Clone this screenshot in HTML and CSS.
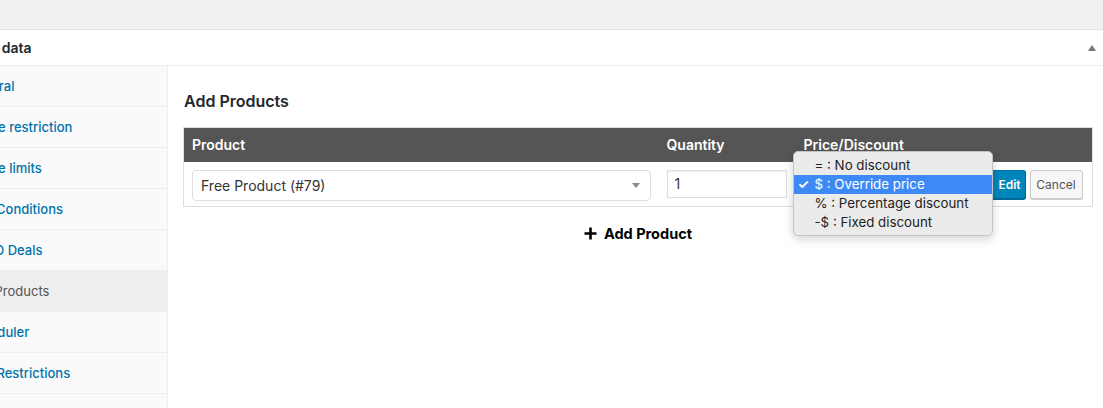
FILE: index.html
```html
<!DOCTYPE html>
<html>
<head>
<meta charset="utf-8">
<link rel="stylesheet" href="styles.css">
</head>
<body>
<div class="topbar"></div>
<div class="postbox">
  <div class="postbox-header">
    <h2 class="hndle">Coupon data</h2>
    <span class="toggle"></span>
  </div>
  <div class="panel-wrap">
    <ul class="tabs">
      <li><a href="#">General</a></li>
      <li><a href="#">Usage restriction</a></li>
      <li><a href="#">Usage limits</a></li>
      <li><a href="#">Cart Conditions</a></li>
      <li><a href="#">BOGO Deals</a></li>
      <li class="active"><a href="#">Add Products</a></li>
      <li><a href="#">Scheduler</a></li>
      <li><a href="#">Role Restrictions</a></li>
    </ul>
    <div class="panel">
      <h3 class="panel-title">Add Products</h3>
      <table class="products">
        <colgroup>
          <col class="c-product">
          <col class="c-qty">
          <col class="c-price">
          <col>
        </colgroup>
        <thead>
          <tr><th>Product</th><th>Quantity</th><th class="th-price">Price/Discount</th><th></th></tr>
        </thead>
        <tbody>
          <tr>
            <td>
              <div class="select product-select">
                <span>Free Product (#79)</span>
                <span class="arrow"></span>
              </div>
            </td>
            <td><div class="input">1</div></td>
            <td class="price-cell">
              <div class="select price-select"><span>$ : Override price</span></div>
              <div class="menu">
                <div class="opt">= : No discount</div>
                <div class="opt selected"><span class="check">✓</span>$ : Override price</div>
                <div class="opt">% : Percentage discount</div>
                <div class="opt">-$ : Fixed discount</div>
              </div>
            </td>
            <td class="actions">
              <button class="btn btn-primary">Edit</button>
              <button class="btn btn-cancel">Cancel</button>
            </td>
          </tr>
        </tbody>
      </table>
      <div class="add-row">
        <a class="add-link" href="#">
          <svg width="13" height="13" viewBox="0 0 13 13"><path d="M6.5 0.5v12M0.5 6.5h12" stroke="#000" stroke-width="2.6"/></svg>
          Add Product
        </a>
      </div>
    </div>
  </div>
</div>
</body>
</html>
```
FILE: styles.css
```css
* { box-sizing: border-box; }
html, body { margin: 0; padding: 0; }
body {
  background: #f1f1f1;
  font-family: Inter, "Noto Sans", sans-serif;
  color: #23282d;
  overflow: hidden;
  height: 408px;
}
.topbar { height: 29px; background: #f1f1f1; }
.postbox {
  background: #fff;
  border-top: 1px solid #e5e5e5;
  margin-left: -67px;
}
.postbox-header {
  height: 36px;
  border-bottom: 1px solid #eee;
  display: flex;
  align-items: center;
  justify-content: space-between;
  padding: 0 7px 0 12px;
}
.hndle {
  margin: 0;
  font-size: 14px;
  font-weight: 600;
  color: #23282d;
}
.toggle {
  width: 0; height: 0;
  border-left: 4px solid transparent;
  border-right: 4px solid transparent;
  border-bottom: 6px solid #72777c;
  margin-top: 1px;
}
.panel-wrap {
  display: flex;
  height: 343px;
}
.tabs {
  list-style: none;
  margin: 0; padding: 0;
  width: 235px;
  flex: none;
  background: #fafafa;
  border-right: 1px solid #eee;
}
.tabs li {
  height: 41px;
  border-bottom: 1px solid #eee;
  display: flex;
  align-items: center;
  padding-left: 33px;
}
.tabs a {
  color: #0073aa;
  text-decoration: none;
  font-size: 13px;
  font-weight: 500;
}
.tabs li.active { background: #eee; }
.tabs li.active a { color: #555; font-weight: 400; }
.panel {
  flex: 1;
  padding: 24px 10px 0 15px;
}
.panel-title {
  margin: 0 0 15px 1px;
  font-size: 16px;
  line-height: 22px;
  font-weight: 600;
  color: #23282d;
}
.products {
  width: 910px;
  border-collapse: collapse;
  table-layout: fixed;
  border: 1px solid #ddd;
}
.c-product { width: 475px; }
.c-qty { width: 136px; }
.c-price { width: 190px; }
.products th {
  background: #555;
  color: #fff;
  text-align: left;
  font-size: 14px;
  font-weight: 600;
  height: 34px;
  padding: 0 8px;
}
.products th.th-price { padding-left: 9px; }
.products td {
  padding: 8px 0 5px 8px;
  vertical-align: top;
}
.select {
  height: 31px;
  border: 1px solid #ddd;
  border-radius: 4px;
  display: flex;
  align-items: center;
  justify-content: space-between;
  padding: 0 9px 0 8px;
  font-size: 14px;
  color: #333;
  background: #fff;
}
.product-select { width: 459px; }
.arrow {
  width: 0; height: 0;
  border-left: 4px solid transparent;
  border-right: 4px solid transparent;
  border-top: 5px solid #888;
  margin-right: 1px;
}
.input {
  width: 120px;
  height: 28px;
  border: 1px solid #ddd;
  font-size: 14px;
  color: #333;
  display: flex;
  align-items: center;
  padding-left: 7px;
  box-shadow: inset 0 1px 2px rgba(0,0,0,0.07);
}
.price-cell { position: relative; }
.price-select { width: 182px; height: 28px; }
.menu {
  position: absolute;
  left: -2px;
  top: -11px;
  width: 200px;
  height: 85px;
  background: #ebebeb;
  border: 1px solid #c4c4c4;
  border-radius: 5px;
  box-shadow: 0 3px 10px rgba(0,0,0,0.18);
  padding: 4px 0 3px;
  font-size: 13.3px;
  color: #222;
  z-index: 5;
}
.opt {
  height: 19px;
  line-height: 19px;
  padding-left: 21px;
  position: relative;
  white-space: nowrap;
}
.opt.selected { background: #3d8af7; color: #fff; }
.check {
  position: absolute;
  left: 4px;
  top: 0;
  font-size: 13px;
  font-weight: 700;
}
.actions {
  display: flex;
  gap: 4px;
  padding-left: 4px !important;
}
.btn {
  height: 29px;
  font-family: inherit;
  font-size: 12px;
  border: 1px solid #ccc;
  background: #f7f7f7;
  color: #555;
  border-radius: 3px;
  padding: 0;
  box-shadow: 0 1px 0 #ccc;
  cursor: pointer;
}
.btn-cancel { width: 53px; }
.btn-primary {
  width: 37px;
  background: #0085ba;
  border-color: #0073aa #006799 #006799;
  color: #fff;
  font-weight: 600;
  box-shadow: 0 1px 0 #006799;
  padding: 0 0 0 5px;
}
.add-row {
  width: 910px;
  text-align: center;
  padding-top: 17px;
}
.add-link {
  display: inline-flex;
  align-items: center;
  gap: 7px;
  color: #000;
  text-decoration: none;
  font-size: 14.5px;
  font-weight: 700;
}
```
